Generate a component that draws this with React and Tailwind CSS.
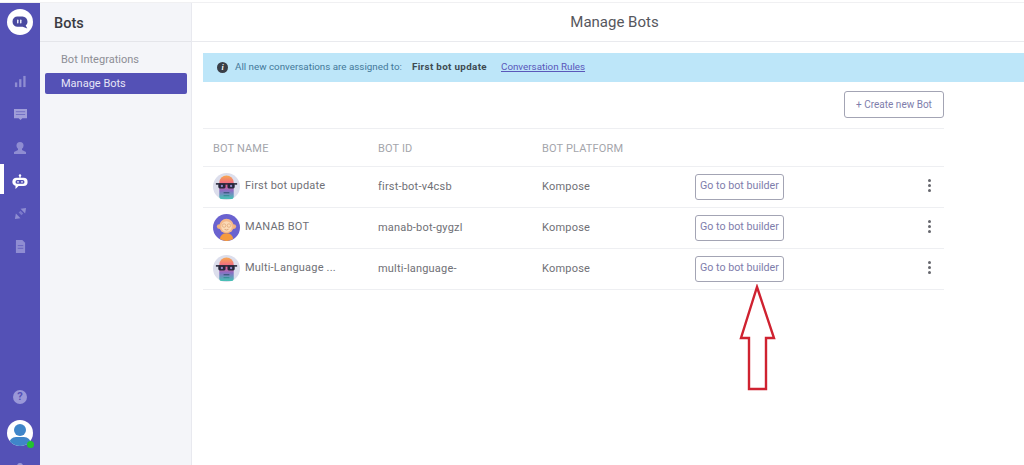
const BotFace = ({ id }) => (
  <svg viewBox="0 0 28 28" className="w-[27px] h-[27px] shrink-0">
    <defs>
      <linearGradient id={id} x1="0" y1="0" x2="0" y2="1">
        <stop offset="0" stopColor="#f8a94f" />
        <stop offset="0.4" stopColor="#ee5f8e" />
        <stop offset="0.65" stopColor="#8a6fc4" />
        <stop offset="1" stopColor="#45c4b4" />
      </linearGradient>
    </defs>
    <circle cx="14" cy="14" r="14" fill="#dcdeec" />
    <path d="M6.5 10a7.5 7.5 0 0 1 15 0v14a3 3 0 0 1-3 3h-9a3 3 0 0 1-3-3z" fill={`url(#${id})`} />
    <rect x="3" y="10.5" width="22" height="1.6" fill="#26263a" />
    <rect x="5.5" y="11" width="7.5" height="5" rx="1.5" fill="#26263a" />
    <rect x="15" y="11" width="7.5" height="5" rx="1.5" fill="#26263a" />
    <circle cx="9.2" cy="13.5" r="1.2" fill="#8f86c9" />
    <circle cx="18.8" cy="13.5" r="1.2" fill="#8f86c9" />
    <path d="M11 20.5h6" stroke="#2a4a6a" strokeWidth="1" />
    <path d="M11 23.5h6" stroke="#2f8f90" strokeWidth="1" />
  </svg>
);

const MonkeyFace = () => (
  <svg viewBox="0 0 28 28" className="w-[27px] h-[27px] shrink-0">
    <circle cx="14" cy="14" r="14" fill="#6a62cf" />
    <circle cx="6.5" cy="13" r="2.5" fill="#f3b27a" />
    <circle cx="21.5" cy="13" r="2.5" fill="#f3b27a" />
    <circle cx="14" cy="12.5" r="7.5" fill="#f5b98a" />
    <circle cx="14" cy="13" r="5.5" fill="#fbd9b5" />
    <circle cx="11.5" cy="12" r="1.8" fill="none" stroke="#d79a6c" strokeWidth="0.6" />
    <circle cx="16.5" cy="12" r="1.8" fill="none" stroke="#d79a6c" strokeWidth="0.6" />
    <path d="M12 16q2 1.2 4 0" stroke="#c98a5e" strokeWidth="0.7" fill="none" />
    <path d="M7 26q1-6 7-6t7 6a14 14 0 0 1-14 0z" fill="#f59a3e" />
  </svg>
);

const bots = [
  { name: 'First bot update', id: 'first-bot-v4csb', face: <BotFace id="bot-skin-1" /> },
  { name: 'MANAB BOT', id: 'manab-bot-gygzl', face: <MonkeyFace /> },
  { name: 'Multi-Language ...', id: 'multi-language-', face: <BotFace id="bot-skin-2" /> },
];

const RailIcon = ({ children, active }) => (
  <div className="relative h-[33px] w-10 flex items-center justify-center">
    {active && <div className="absolute left-0 top-0 h-[30px] w-[4px] bg-white" />}
    {children}
  </div>
);

const Rail = () => (
  <div className="w-10 shrink-0 bg-[#5451b6] flex flex-col items-center relative overflow-hidden">
    <div className="mt-[6px] w-[26px] h-[26px] rounded-full bg-white flex items-center justify-center">
      <svg viewBox="0 0 20 20" className="w-[20px] h-[20px]">
        <path d="M8 4.5h4.5a5.2 5.2 0 0 1 5 5.2c0 1.8-.8 3-1.8 3.8l1.6 3-4.6-1.8H8a5 5 0 0 1-5.5-5A5 5 0 0 1 8 4.5z" fill="#4a4aa0" />
        <rect x="7" y="7.5" width="1.5" height="4" rx="0.7" fill="#e8e8f6" />
        <rect x="10" y="7.5" width="1.5" height="4" rx="0.7" fill="#e8e8f6" />
      </svg>
    </div>
    <div className="mt-[30px] flex flex-col">
      <RailIcon>
        <svg viewBox="0 0 14 14" className="w-[13px] h-[13px]" fill="#8f8dd2">
          <rect x="1" y="8" width="2.5" height="5" />
          <rect x="5.5" y="4.5" width="2.5" height="8.5" />
          <rect x="10" y="1" width="2.5" height="12" />
        </svg>
      </RailIcon>
      <RailIcon>
        <svg viewBox="0 0 16 14" className="w-[15px] h-[13px]">
          <path d="M1 1h14v10h-5l-2 2-2-2H1z" fill="#a09ed9" />
          <path d="M3 4h10M3 7h10" stroke="#6f6dc4" strokeWidth="1" />
        </svg>
      </RailIcon>
      <RailIcon>
        <svg viewBox="0 0 14 14" className="w-[14px] h-[14px]" fill="#8f8dd2">
          <circle cx="7" cy="4.5" r="3.5" />
          <path d="M5 7h4v2l4 2v2H1v-2l4-2z" />
        </svg>
      </RailIcon>
      <RailIcon active>
        <svg viewBox="0 0 16 17" className="w-[16px] h-[17px] mt-[3px]">
          <circle cx="8" cy="1.5" r="1.2" fill="#fff" />
          <path d="M8 2v2" stroke="#fff" strokeWidth="1" />
          <path d="M4.5 3.8h7a4 4 0 0 1 0 8.2H6.5L3.5 15v-3.3A4 4 0 0 1 4.5 3.8z" fill="#fff" />
          <rect x="3.5" y="6" width="9" height="3.8" rx="1.9" fill="#5451b6" />
          <circle cx="6" cy="7.9" r="0.8" fill="#fff" />
          <circle cx="10" cy="7.9" r="0.8" fill="#fff" />
        </svg>
      </RailIcon>
      <RailIcon>
        <svg viewBox="0 0 14 14" className="w-[13px] h-[13px]" fill="#8f8dd2">
          <path d="M1 13l1-6 5 5z" />
          <path d="M13 1l-1 6-5-5z" />
          <path d="M5 6l3 3 2-2-3-3z" fill="#7a78ca" />
        </svg>
      </RailIcon>
      <RailIcon>
        <svg viewBox="0 0 12 14" className="w-[11px] h-[13px]">
          <path d="M1 0h7l3 3v11H1z" fill="#8f8dd2" />
          <path d="M3 6h6M3 9h6" stroke="#6662be" strokeWidth="1" />
        </svg>
      </RailIcon>
    </div>
    <div className="mt-auto flex flex-col items-center">
      <div className="w-[14px] h-[14px] rounded-full bg-[#9a98d8] text-[#5451b6] text-[11px] leading-[14px] font-bold text-center">?</div>
      <div className="relative mt-[16px] mb-[19px] w-[26px] h-[26px] rounded-full bg-white">
        <div className="absolute inset-0 rounded-full overflow-hidden">
          <div className="absolute left-[7px] top-[4px] w-[12px] h-[12px] rounded-full bg-[#3f86c9]" />
          <div className="absolute left-[2px] top-[17px] w-[22px] h-[14px] rounded-full bg-[#3f86c9]" />
        </div>
        <div className="absolute right-[-1px] bottom-[-2px] w-[7px] h-[7px] rounded-full bg-[#22c32e]" />
      </div>
      <div className="absolute left-[17px] bottom-[-4px] w-[6px] h-[6px] rounded-full bg-[#9a98d8]" />
    </div>
  </div>
);

const SubNav = () => (
  <div className="w-[152px] shrink-0 bg-[#f4f5f9] border-r border-[#e8e9ef] flex flex-col">
    <div className="h-[39px] pl-[14px] pt-[3px] flex items-center border-b border-[#e4e5ea] text-[#3a3b42] text-[14.5px] font-medium">
      Bots
    </div>
    <div className="pl-[5px] pr-[4px] pt-[5px] flex flex-col">
      <div className="h-[25px] pt-[1px] pl-4 flex items-center text-[11px] text-[#8d8e96]">Bot Integrations</div>
      <div className="h-[21px] pl-4 pt-[1px] flex items-center text-[11px] text-[#e6e5f6] bg-[#5451b6] rounded-[2px] mt-[1px]">
        Manage Bots
      </div>
    </div>
  </div>
);

const BotRow = ({ bot }) => (
  <div className="h-[41px] flex items-center border-b border-[#eeeff2] text-[11px] tracking-[0.2px] text-[#6f7076]">
    <div className="w-[175px] pl-[10px] pr-2 flex items-center gap-[5px] -mt-[1px]">
      {bot.face}
      <span className="-mt-[1px] whitespace-nowrap">{bot.name}</span>
    </div>
    <div className="w-[164px] whitespace-nowrap">{bot.id}</div>
    <div className="w-[153px]">Kompose</div>
    <button className="w-[89px] h-[26px] -mt-[1px] border border-[#a3a4b4] rounded-[3px] text-[10.7px] tracking-normal text-[#7e7dab]">
      Go to bot builder
    </button>
    <div className="ml-auto mr-[13px] -mt-[3px] flex flex-col gap-[2px]">
      <span className="w-[3px] h-[3px] rounded-full bg-[#66676d]" />
      <span className="w-[3px] h-[3px] rounded-full bg-[#66676d]" />
      <span className="w-[3px] h-[3px] rounded-full bg-[#66676d]" />
    </div>
  </div>
);

export default function App() {
  return (
    <div className="h-[465px] w-[1024px] overflow-hidden bg-white relative font-['Roboto',sans-serif]">
      <div className="h-[3px] bg-white border-b border-[#f0f0f2]" />
      <div className="h-[462px] flex">
        <Rail />
        <SubNav />
        <div className="flex-1 flex flex-col min-w-0">
          <div className="h-[39px] shrink-0 pl-[13px] border-b border-[#e9eaee] flex items-center justify-center text-[15px] text-[#56575d]">
            Manage Bots
          </div>
          <div className="mt-[11px] ml-[11px] h-[29px] bg-[#bde6f9] flex items-center pl-[14px] text-[9.8px] whitespace-nowrap">
            <span className="w-[11px] h-[11px] rounded-full bg-[#3a3f47] text-white text-[8px] leading-[11px] text-center italic font-bold font-['Liberation_Serif',serif]">i</span>
            <span className="ml-[7px] text-[#44799a]">All new conversations are assigned to:</span>
            <span className="ml-[10px] font-bold text-[#3d4a52] tracking-[0.35px]">First bot update</span>
            <span className="ml-[14px] text-[#5a58ba] underline">Conversation Rules</span>
          </div>
          <div className="ml-[11px] w-[741px]">
            <div className="h-[47px] flex items-start justify-end pt-[9px] border-b border-[#eeeff2]">
              <button className="w-[100px] h-[27px] border border-[#a3a4b4] rounded-[3px] text-[10px] text-[#7e7dab]">
                + Create new Bot
              </button>
            </div>
            <div className="h-[38px] pt-[3px] flex items-center border-b border-[#eeeff2] text-[11px] tracking-[0.15px] text-[#a4a5ab]">
              <div className="w-[175px] pl-[10px]">BOT NAME</div>
              <div className="w-[164px]">BOT ID</div>
              <div>BOT PLATFORM</div>
            </div>
            {bots.map((bot) => (
              <BotRow key={bot.name} bot={bot} />
            ))}
          </div>
        </div>
      </div>
      {/* red annotation arrow drawn over the page */}
      <svg viewBox="0 0 40 108" className="absolute left-[738px] top-[284px] w-[40px] h-[108px]" fill="none">
        <path d="M19 3 L36 54 H28 V105 H11 V54 H3 Z" stroke="#cf2230" strokeWidth="2.4" />
      </svg>
    </div>
  );
}
